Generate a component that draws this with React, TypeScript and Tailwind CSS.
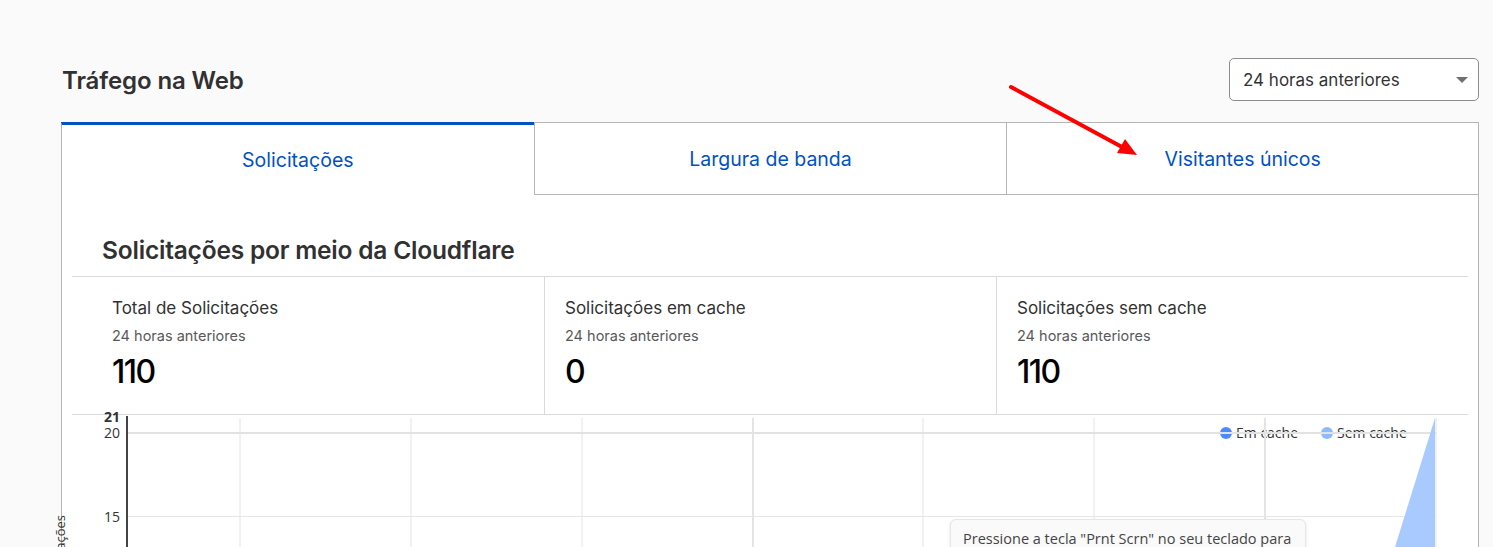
import { ChevronDown } from "lucide-react";

const stats = [
  { label: "Total de Solicitações", value: "110" },
  { label: "Solicitações em cache", value: "0" },
  { label: "Solicitações sem cache", value: "110" },
];

const tabs = ["Solicitações", "Largura de banda", "Visitantes únicos"];

const vLines = [168, 339, 510, 681, 851, 1022, 1193, 1364];

const RequestsChart = () => {
  return (
    <div className="relative h-[300px]">
      <svg width="1395" height="300" className="absolute left-0 top-0 overflow-visible">
        {/* y axis title, mostly scrolled below the fold */}
        <text
          transform="rotate(-90)"
          x={-100}
          y={-7}
          textAnchor="end"
          fontSize="13"
          fill="#333"
          fontFamily="'Open Sans', sans-serif"
        >
          Solicitações
        </text>

        {/* legend */}
        <circle cx={1154} cy={18} r={6} fill="#4a8cf7" />
        <text x={1164} y={23} fontSize="14" fill="#333" fontFamily="'Open Sans', sans-serif">
          Em cache
        </text>
        <circle cx={1255} cy={18} r={6} fill="#8cbafa" />
        <text x={1265} y={23} fontSize="14" fill="#333" fontFamily="'Open Sans', sans-serif">
          Sem cache
        </text>

        {/* grid */}
        {vLines.map((x, i) => (
          <line
            key={x}
            x1={x}
            x2={x}
            y1={3}
            y2={300}
            stroke="#e4e4e4"
            strokeWidth={i === 3 || i === 6 ? 2 : 1}
          />
        ))}
        <line x1={55} x2={1364} y1={18} y2={18} stroke="#e2e2e2" strokeWidth={2} />
        <line x1={55} x2={1364} y1={101.5} y2={101.5} stroke="#e6e6e6" strokeWidth={1} />
        <line x1={55} x2={1364} y1={184.5} y2={184.5} stroke="#e6e6e6" strokeWidth={1} />
        <line x1={55} x2={1364} y1={267.5} y2={267.5} stroke="#e6e6e6" strokeWidth={1} />

        {/* uncached area */}
        <polygon points="1363,3 1271,300 1363,300" fill="#a8caff" />

        {/* axis */}
        <line x1={55} x2={55} y1={1} y2={300} stroke="#444" strokeWidth={2} />
        <g fontFamily="'Open Sans', sans-serif" fill="#333" textAnchor="end">
          <text x={48} y={7} fontSize="14" fontWeight="700">
            21
          </text>
          <text x={48} y={23} fontSize="14">
            20
          </text>
          <text x={48} y={107} fontSize="14">
            15
          </text>
          <text x={48} y={190} fontSize="14">
            10
          </text>
          <text x={48} y={273} fontSize="14">
            5
          </text>
        </g>
      </svg>

      <div className="absolute left-[878px] top-[104px] w-[356px] rounded-md border border-[#e6e6e6] bg-[#fafafa] px-[12px] pt-[9px] pb-[10px] text-[14.5px] leading-[20px] text-[#444] shadow-sm font-['Open_Sans',sans-serif]">
        Pressione a tecla "Prnt Scrn" no seu teclado para capturar a tela inteira.
      </div>
    </div>
  );
};

export default function App() {
  return (
    <div className="relative h-[547px] overflow-hidden bg-[#fafafa] pl-[61px] pr-[14px] pt-[58px] font-['Inter',sans-serif] text-[#313131]">
      <div className="flex h-[43px] items-center justify-between">
        <h1 className="pl-px pt-[2px] text-[24px] font-semibold leading-[32px] tracking-[-0.1px]">Tráfego na Web</h1>
        <div className="flex h-[43px] w-[250px] items-center justify-between rounded-[5px] border border-[#8c8c8c] bg-white pl-[13px] pr-[10px] pt-[2px] text-[17px] text-[#333]">
          <span>24 horas anteriores</span>
          <svg width="12" height="7" viewBox="0 0 12 7">
            <polygon points="0,0 12,0 6,6" fill="#707070" />
          </svg>
        </div>
      </div>

      <div className="mt-[21px]">
        <div className="grid grid-cols-3">
          {tabs.map((t, i) => (
            <div
              key={t}
              className={
                i === 0
                  ? "flex h-[73px] items-center justify-center border-l border-t-[3px] border-[#b5b5b5] border-t-[#0051c3] bg-white pt-[2px] text-[19.5px] text-[#0051c3]"
                  : i === 2
                  ? "flex h-[73px] items-center justify-center border-x border-y border-[#b5b5b5] bg-white pt-[3px] text-[19.5px] text-[#0051c3]"
                  : "flex h-[73px] items-center justify-center border-l border-y border-[#b5b5b5] bg-white pt-[3px] text-[19.5px] text-[#0051c3]"
              }
            >
              {t}
            </div>
          ))}
        </div>

        <div className="border-x border-[#b5b5b5] bg-white px-[10px] pb-[40px]">
          <h2 className="pl-[30px] pt-[39px] pb-[10px] text-[24.5px] font-semibold leading-[32px] tracking-[-0.2px]">
            Solicitações por meio da Cloudflare
          </h2>
          <div className="grid grid-cols-3 border-y border-[#dadada] px-[20px]">
            {stats.map((s, i) => (
              <div key={s.label} className={i === 0 ? "pl-[20px] pt-[19px] pb-[22px]" : "border-l border-[#dadada] pl-[20px] pt-[19px] pb-[22px]"}>
                <div className="text-[17px] leading-[24px] text-[#313131]">{s.label}</div>
                <div className="mt-[6px] text-[14.5px] leading-[20px] text-[#595959]">24 horas anteriores</div>
                <div className="mt-[6px] text-[32px] font-medium leading-[40px] tracking-[-1.5px] text-black">{s.value}</div>
              </div>
            ))}
          </div>
          <RequestsChart />
        </div>
      </div>

      {/* red annotation arrow */}
      <svg className="pointer-events-none absolute left-0 top-0" width="1493" height="547">
        <line x1={1011} y1={87} x2={1122} y2={147} stroke="#ff0000" strokeWidth={4} strokeLinecap="round" />
        <polygon points="1137,155 1117,153 1125,139" fill="#ff0000" />
      </svg>
    </div>
  );
}
